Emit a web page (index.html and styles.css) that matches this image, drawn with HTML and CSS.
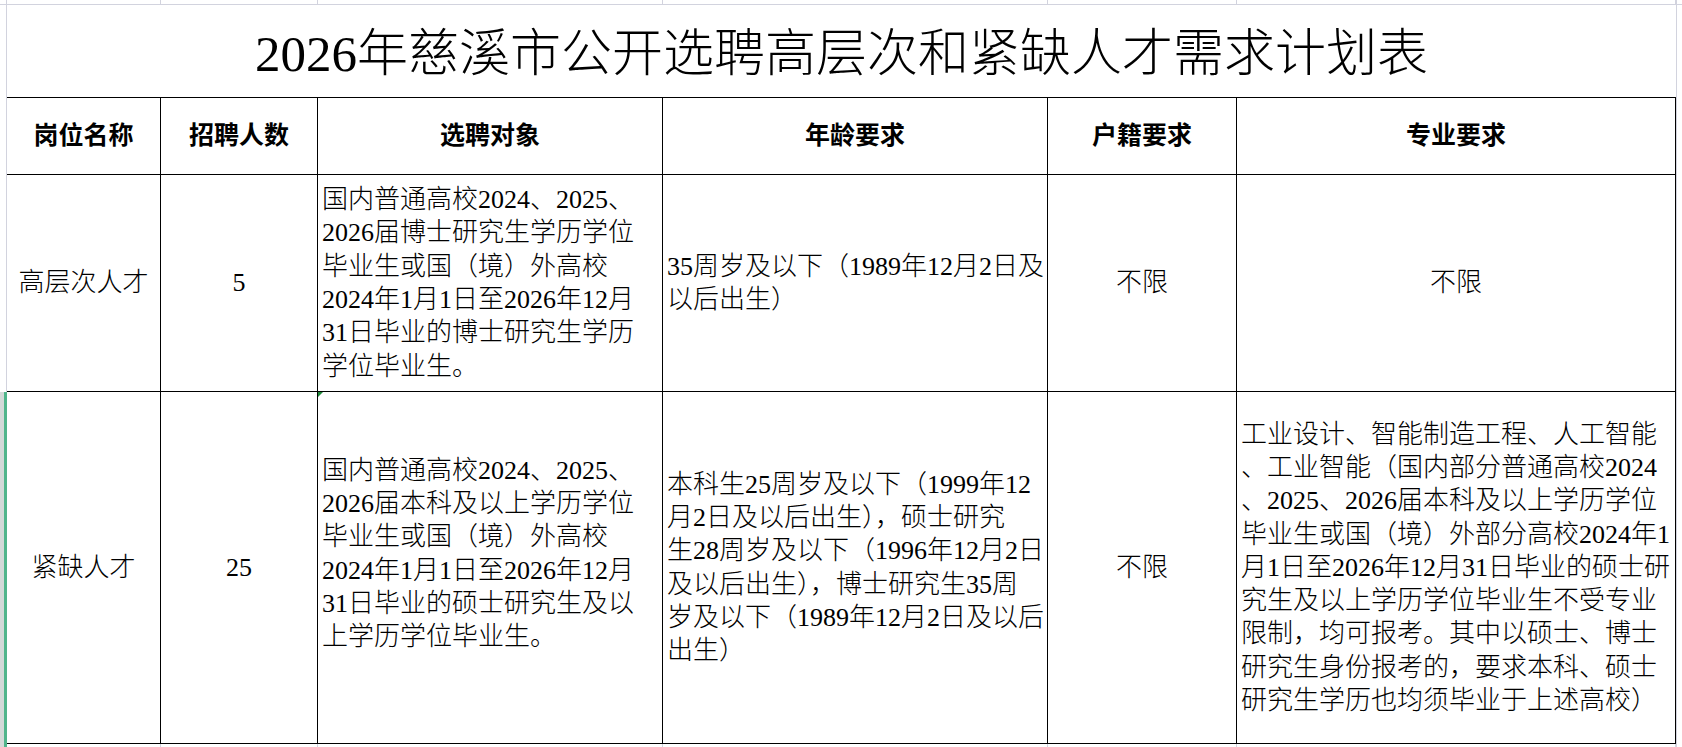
FILE: index.html
```html
<!DOCTYPE html>
<html lang="zh-CN">
<head>
<meta charset="utf-8">
<title>2026年慈溪市公开选聘高层次和紧缺人才需求计划表</title>
<link rel="stylesheet" href="styles.css">
</head>
<body>
<div class="sheet">
  <div class="strip gut"></div>
  <div class="strip"></div><div class="strip"></div><div class="strip"></div>
  <div class="strip"></div><div class="strip"></div><div class="strip"></div>
  <div class="strip tail"></div>

  <div class="gut"></div>
  <div class="title">2026年慈溪市公开选聘高层次和紧缺人才需求计划表</div>
  <div class="tail"></div>

  <div class="gut"></div>
  <div class="cell head">岗位名称</div>
  <div class="cell head">招聘人数</div>
  <div class="cell head">选聘对象</div>
  <div class="cell head">年龄要求</div>
  <div class="cell head">户籍要求</div>
  <div class="cell head">专业要求</div>
  <div class="tail"></div>

  <div class="gut"></div>
  <div class="cell">高层次人才</div>
  <div class="cell">5</div>
  <div class="cell left">国内普通高校2024、2025、<br>2026届博士研究生学历学位<br>毕业生或国（境）外高校<br>2024年1月1日至2026年12月<br>31日毕业的博士研究生学历<br>学位毕业生。</div>
  <div class="cell left">35周岁及以下（1989年12月2日及<br>以后出生）</div>
  <div class="cell">不限</div>
  <div class="cell">不限</div>
  <div class="tail"></div>

  <div class="gut sel"></div>
  <div class="cell">紧缺人才</div>
  <div class="cell">25</div>
  <div class="cell left raise flag">国内普通高校2024、2025、<br>2026届本科及以上学历学位<br>毕业生或国（境）外高校<br>2024年1月1日至2026年12月<br>31日毕业的硕士研究生及以<br>上学历学位毕业生。</div>
  <div class="cell left">本科生25周岁及以下（1999年12<br>月2日及以后出生），硕士研究<br>生28周岁及以下（1996年12月2日<br>及以后出生），博士研究生35周<br>岁及以下（1989年12月2日及以后<br>出生）</div>
  <div class="cell">不限</div>
  <div class="cell left">工业设计、智能制造工程、人工智能<br>、工业智能（国内部分普通高校2024<br>、2025、2026届本科及以上学历学位<br>毕业生或国（境）外部分高校2024年1<br>月1日至2026年12月31日毕业的硕士研<br>究生及以上学历学位毕业生不受专业<br>限制，均可报考。其中以硕士、博士<br>研究生身份报考的，要求本科、硕士<br>研究生学历也均须毕业于上述高校）</div>
  <div class="tail"></div>

  <div class="bstrip gut sel"></div>
  <div class="bstrip"></div><div class="bstrip"></div><div class="bstrip"></div>
  <div class="bstrip"></div><div class="bstrip"></div><div class="bstrip"></div>
  <div class="bstrip tail"></div>
</div>
</body>
</html>
```

FILE: styles.css
```css
html, body {
  margin: 0;
  padding: 0;
  background: #ffffff;
}

body {
  font-family: "Liberation Serif", "Noto Sans CJK SC", serif;
  color: #000;
}

.sheet {
  width: 1682px;
  height: 747px;
  overflow: hidden;
  display: grid;
  grid-template-columns: 7px 154px 157px 345px 385px 189px 439px 6px;
  grid-template-rows: 5px 93px 77px 217px 352px 3px;
  background: #fff;
}

.sheet > div {
  box-sizing: border-box;
}

.strip {
  border-right: 1px solid #d2d3de;
  border-bottom: 1px solid #d2d3de;
}

.bstrip {
  border-right: 1px solid #d2d3de;
}

.strip.tail,
.bstrip.tail {
  border-right: none;
}

.gut {
  border-right: 1px solid #d2d3de;
}

.gut.sel {
  border-right: none;
  background: linear-gradient(to right, #d3d9d8 0 4px, #50b58b 4px 7px);
}

.tail {
  border-left: 1px solid #d2d3de;
}

.title {
  grid-column: 2 / 8;
  border-bottom: 1px solid #000;
  display: flex;
  align-items: center;
  justify-content: center;
  font-size: 51px;
  font-weight: 300;
  letter-spacing: 0;
  padding-bottom: 4px;
  white-space: nowrap;
}

.cell {
  position: relative;
  border-right: 1px solid #000;
  border-bottom: 1px solid #000;
  display: flex;
  align-items: center;
  justify-content: center;
  text-align: center;
  font-size: 26px;
  font-weight: 300;
  line-height: 33.3px;
  white-space: nowrap;
}

.cell.head {
  font-weight: 700;
  font-size: 25px;
}

.cell.left {
  justify-content: flex-start;
  text-align: left;
  padding-left: 4px;
}

.cell.raise {
  padding-bottom: 28px;
}

.cell.flag::before {
  content: "";
  position: absolute;
  left: 0;
  top: 0;
  width: 0;
  height: 0;
  border-top: 5px solid #1f8a3a;
  border-right: 5px solid transparent;
}
```
